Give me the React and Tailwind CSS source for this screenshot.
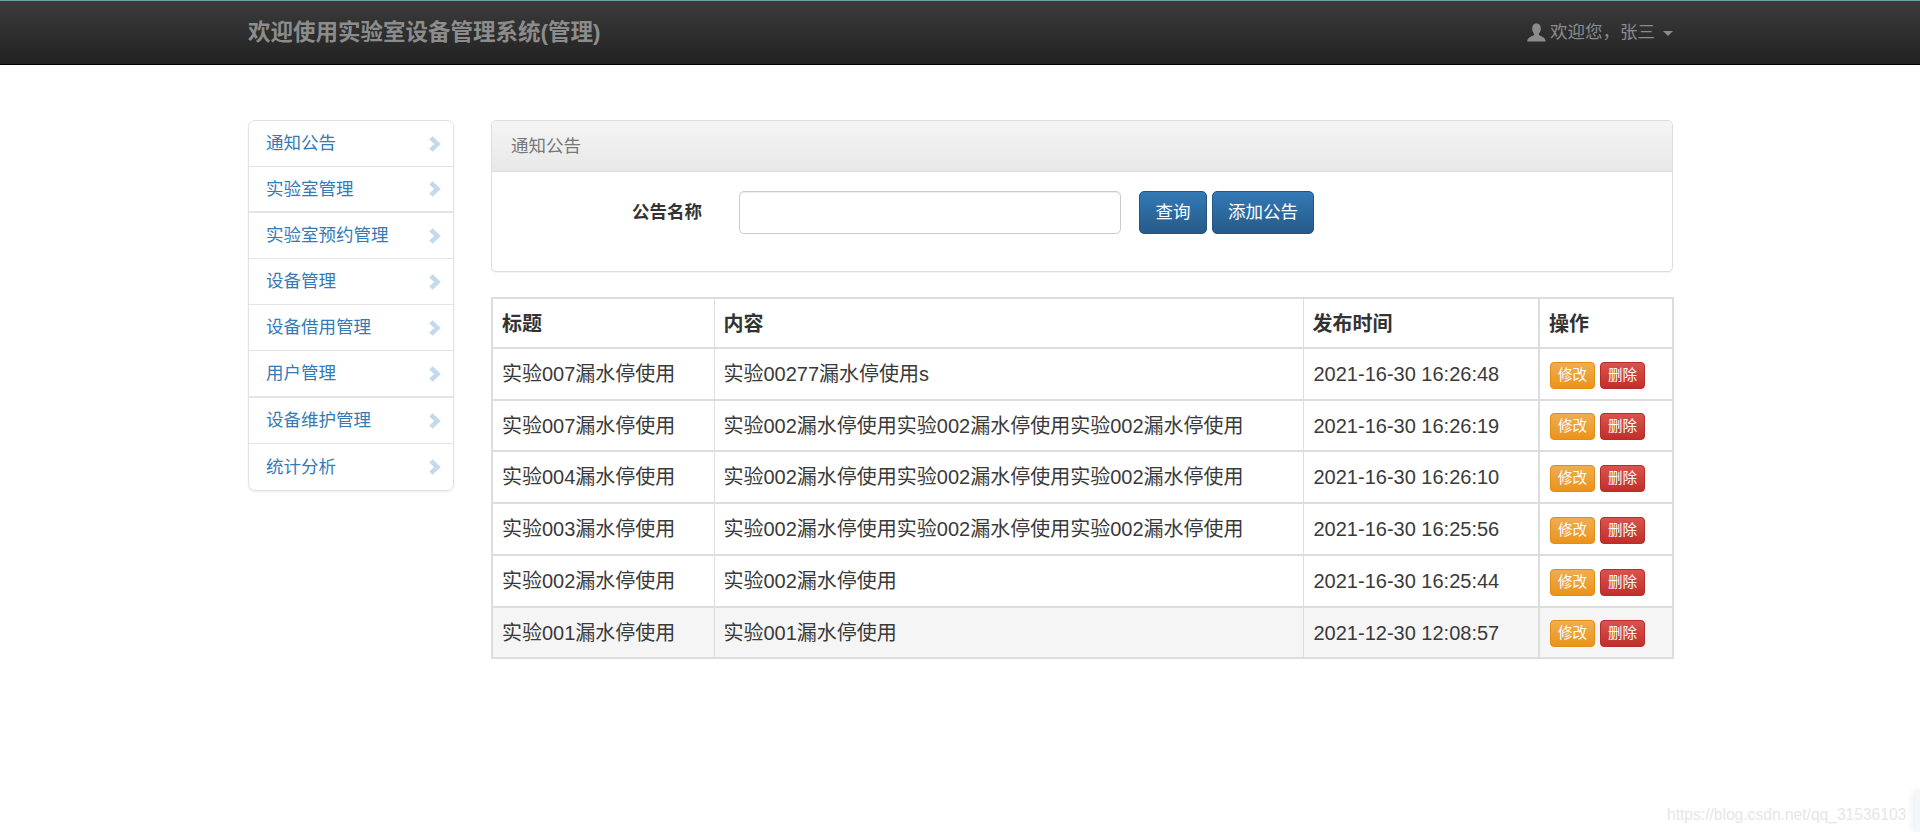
const cjk = { fontFamily: '"Liberation Sans", "Noto Sans CJK SC", sans-serif' }

const menu = [
  { label: '通知公告' },
  { label: '实验室管理', line: 'thick' },
  { label: '实验室预约管理' },
  { label: '设备管理' },
  { label: '设备借用管理' },
  { label: '用户管理', line: 'thick', tall: true },
  { label: '设备维护管理' },
  { label: '统计分析', line: 'none' },
]

const rows = [
  ['实验007漏水停使用', '实验00277漏水停使用s', '2021-16-30 16:26:48', 'h-[52px]'],
  ['实验007漏水停使用', '实验002漏水停使用实验002漏水停使用实验002漏水停使用', '2021-16-30 16:26:19', 'h-[51px]'],
  ['实验004漏水停使用', '实验002漏水停使用实验002漏水停使用实验002漏水停使用', '2021-16-30 16:26:10', 'h-[52px]'],
  ['实验003漏水停使用', '实验002漏水停使用实验002漏水停使用实验002漏水停使用', '2021-16-30 16:25:56', 'h-[52px]'],
  ['实验002漏水停使用', '实验002漏水停使用', '2021-16-30 16:25:44', 'h-[52px]'],
  ['实验001漏水停使用', '实验001漏水停使用', '2021-12-30 12:08:57', 'h-[51px]'],
]

function Chevron() {
  return (
    <svg width="12" height="16" viewBox="0 0 12 16" className="shrink-0">
      <path d="M3.6 0.2 L11.8 8 L3.6 15.8 L0.2 12.6 L5.2 8 L0.2 3.4 Z" fill="#c4d9ec" />
    </svg>
  )
}

function SmallButton({ children, className }) {
  return (
    <button className={`h-[27px] w-[45px] rounded-[4px] border text-[14.5px] leading-none text-white ${className}`}>
      {children}
    </button>
  )
}

export default function App() {
  return (
    <div className="relative h-[832px] overflow-hidden bg-white text-[#333] text-[17.5px]" style={cjk}>
      <nav className="h-[65px] border-t border-b border-t-[#6f9ca0] border-b-black bg-gradient-to-b from-[#3c3c3c] to-[#222]">
        <div className="ml-[248px] flex h-full w-[1425px] items-center justify-between">
          <span className="text-[22.5px] font-bold text-[#8c8c8c]">欢迎使用实验室设备管理系统(管理)</span>
          <span className="flex items-center text-[#8c8c8c]">
            <svg width="19" height="19" viewBox="0 0 19 19" className="mr-[4px]">
              <path d="M9.5 0.5 C12.6 0.5 14 3 13.8 6 C13.7 8 12.8 9.7 11.9 10.8 C11.6 11.6 12 12.3 13 12.8 C15.5 13.8 18.3 14.6 18.8 18.6 L0.2 18.6 C0.7 14.6 3.5 13.8 6 12.8 C7 12.3 7.4 11.6 7.1 10.8 C6.2 9.7 5.3 8 5.2 6 C5 3 6.4 0.5 9.5 0.5 Z" fill="#8c8c8c" />
            </svg>
            <span className="mr-[1px]">欢迎您，张三</span>
            <span className="ml-[7px] mt-[2px] h-0 w-0 border-x-[5px] border-t-[5px] border-x-transparent border-t-[#8c8c8c]" />
          </span>
        </div>
      </nav>

      <div className="ml-[248px] mt-[55px] flex w-[1425px] items-start gap-[37px]">
        <aside className="w-[206px] shrink-0 rounded-[7px] border border-[#e2e2e2] shadow-[0_1px_2px_rgba(0,0,0,0.08)]">
          {menu.map((item) => (
            <a
              key={item.label}
              className={`flex items-center justify-between pl-[17px] pr-[12px] text-[#337ab7] ${item.tall ? 'h-[47px]' : 'h-[46px]'} ${
                item.line === 'none' ? '' : item.line === 'thick' ? 'border-b-2 border-[#e4e4e4]' : 'border-b border-[#e4e4e4]'
              }`}
            >
              {item.label}
              <Chevron />
            </a>
          ))}
        </aside>

        <main className="min-w-0 flex-1">
          <section className="h-[152px] rounded-[5px] border border-[#ddd] shadow-[0_1px_1px_rgba(0,0,0,0.05)]">
            <div className="flex h-[51px] items-center rounded-t-[5px] border-b border-[#ddd] bg-gradient-to-b from-[#f5f5f5] to-[#e8e8e8] pl-[19px] text-[#777]">
              通知公告
            </div>
            <form className="mt-[19px] flex items-center">
              <label className="ml-[140px] w-[70px] font-bold">公告名称</label>
              <input className="ml-[37px] h-[43px] w-[382px] rounded-[5px] border border-[#ccc] bg-white shadow-[inset_0_1px_1px_rgba(0,0,0,0.075)]" />
              <button type="button" className="ml-[18px] h-[43px] w-[68px] rounded-[5px] border border-[#245580] bg-gradient-to-b from-[#337ab7] to-[#265a88] text-white">
                查询
              </button>
              <button type="button" className="ml-[5px] h-[43px] w-[102px] rounded-[5px] border border-[#245580] bg-gradient-to-b from-[#337ab7] to-[#265a88] text-white">
                添加公告
              </button>
            </form>
          </section>

          <table className="mt-[25px] w-[1181px] table-fixed border-collapse border-2 border-[#ddd] text-[20px] text-[#3a3a3a]">
            <colgroup>
              <col className="w-[222px]" />
              <col className="w-[589px]" />
              <col className="w-[236px]" />
              <col className="w-[134px]" />
            </colgroup>
            <thead>
              <tr className="h-[50px] font-bold text-[#333]">
                <th className="border-y-2 border-r border-[#ddd] pl-[9px] pt-[2px] text-left">标题</th>
                <th className="border-y-2 border-r border-[#ddd] pl-[9px] pt-[2px] text-left">内容</th>
                <th className="border-y-2 border-r-2 border-[#ddd] pl-[9px] pt-[2px] text-left">发布时间</th>
                <th className="border-y-2 border-[#ddd] pl-[9px] pt-[2px] text-left">操作</th>
              </tr>
            </thead>
            <tbody>
              {rows.map(([title, content, time, height], i) => (
                <tr key={i} className={`${height} ${i === rows.length - 1 ? 'bg-[#f5f5f5]' : ''}`}>
                  <td className="border-y-2 border-r border-[#ddd] pl-[9px]">{title}</td>
                  <td className="border-y-2 border-r border-[#ddd] pl-[9px]">{content}</td>
                  <td className="border-y-2 border-r-2 border-[#ddd] pl-[10px]">{time}</td>
                  <td className="border-y-2 border-[#ddd] pl-[10px] pt-[2px]">
                    <div className="flex gap-[5px]">
                      <SmallButton className="border-[#e38d13] bg-gradient-to-b from-[#f0ad4e] to-[#eb9316]">修改</SmallButton>
                      <SmallButton className="border-[#b92c28] bg-gradient-to-b from-[#d9534f] to-[#c12e2a]">删除</SmallButton>
                    </div>
                  </td>
                </tr>
              ))}
            </tbody>
          </table>
        </main>
      </div>

      <span className="absolute left-[1667px] top-[803px] text-[15.6px] text-[#e6e6e6]">https://blog.csdn.net/qq_31536103</span>
      <div className="absolute left-[1915px] top-[791px] h-[41px] w-[5px] bg-[#f3f7fb] shadow-[0_0_8px_rgba(0,0,0,0.15)]" />
    </div>
  )
}
